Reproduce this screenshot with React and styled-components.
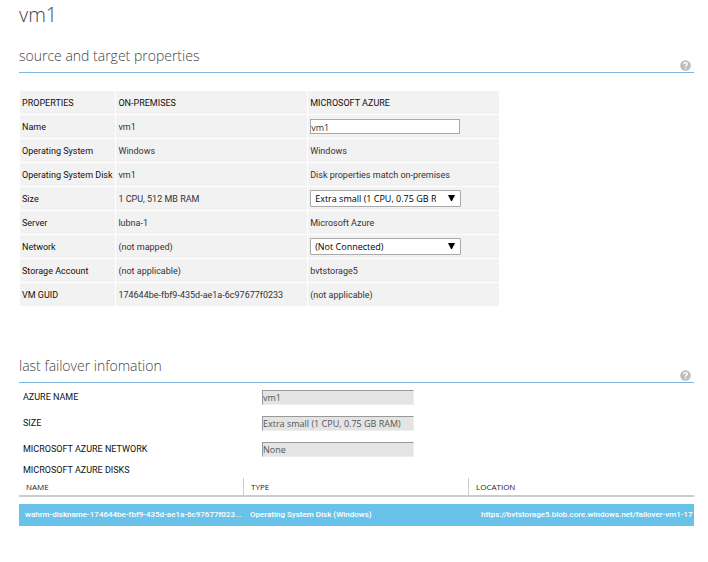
import React from "react";
import styled, { createGlobalStyle } from "styled-components";

const GlobalStyle = createGlobalStyle`
  * { box-sizing: border-box; }
  body {
    margin: 0;
    background: #fff;
    color: #333;
    font: 9px/16px Roboto, "Open Sans", sans-serif;
  }
  input, select, button { font: inherit; color: inherit; margin: 0; }
`;

const Page = styled.main`
  padding: 2px 14px 32px 19px;
`;

const Title = styled.h1`
  margin: 0;
  font-family: "Open Sans", sans-serif;
  font-size: 20px;
  line-height: 26px;
  font-weight: 300;
  color: #444;
`;

const Section = styled.section`
  margin-top: ${(p) => p.$gap}px;
`;

const SectionHeader = styled.header`
  display: flex;
  justify-content: space-between;
  align-items: flex-end;
  height: 28px;
  border-bottom: 1px solid #7fb6e0;
`;

const SectionTitle = styled.h2`
  margin: 0;
  align-self: flex-start;
  font-family: "Open Sans", sans-serif;
  font-size: 14px;
  line-height: 21px;
  font-weight: 300;
  color: #444;
`;

const HelpButton = styled.button`
  display: flex;
  padding: 0;
  margin: 0 3px 1px 0;
  border: 0;
  background: none;
`;

const PropertyTable = styled.table`
  width: 100%;
  max-width: 481px;
  margin-top: 17px;
  border-spacing: 1px;
  table-layout: fixed;
  font-size: 9px;

  th, td {
    height: 23px;
    padding: 0 2px;
    background: #f2f2f2;
    text-align: left;
    white-space: nowrap;
  }
  th { font-weight: 400; color: #111; }
`;

const PropertyColumn = styled.col`
  width: ${(p) => p.$width};
`;

const TextInput = styled.input`
  display: block;
  width: 150px;
  max-width: 100%;
  height: 15px;
  padding: 1px 0 0;
  border: 1px solid #a9a9a9;
  border-radius: 0;
  background: #fff;
  font-family: "Open Sans", sans-serif;
  font-size: 9px;
  line-height: 12px;
`;

const ReadOnlyInput = styled(TextInput)`
  width: 152px;
  color: #555;
  background: #e4e4e4;
  border-color: #999 #eee #eee #999;
`;

const SelectWrap = styled.div`
  display: grid;
  width: 151px;
  max-width: 100%;
  align-items: center;

  > * { grid-area: 1 / 1; }
  svg { justify-self: end; margin: 0 6px 2px 0; pointer-events: none; }
`;

const Select = styled.select`
  appearance: none;
  width: 100%;
  height: 17px;
  padding: 1px 24px 0 4px;
  border: 1px solid #a9a9a9;
  border-radius: 1px;
  background: #fff;
  color: #000;
  font-family: "Open Sans", sans-serif;
  font-size: 9px;
  line-height: 14px;
`;

const FailoverForm = styled.div`
  display: grid;
  gap: 10px;
  padding: 6px 0 0 4px;
`;

const Field = styled.div`
  display: grid;
  grid-template-columns: 239px 1fr;
  align-items: center;
  height: 16px;
  color: #111;
`;

const DisksTitle = styled.h3`
  margin: 5px 0 0 4px;
  font-size: 9px;
  line-height: 16px;
  font-weight: 400;
  color: #111;
`;

const DiskTable = styled.table`
  width: 100%;
  border-collapse: separate;
  border-spacing: 0;
  table-layout: fixed;
  font-size: 8px;
  line-height: 16px;

  th, td { text-align: left; white-space: nowrap; overflow: hidden; }
  th {
    height: 19px;
    padding: 0 7px;
    border-bottom: 2px solid #ccc;
    border-right: 1px solid #ccc;
    font-family: "Open Sans", sans-serif;
    font-weight: 400;
    color: #222;
  }
  th:last-child { border-right: 0; }
  tbody::before { content: ""; display: block; height: 7px; }
  td {
    height: 22px;
    padding: 0 0 0 6px;
    background: #69c2e9;
    color: #fff;
    font-weight: 500;
  }
  td:last-child { padding-left: 12px; }
`;

function HelpIcon() {
  return (
    <svg width="11" height="11" viewBox="0 0 11 11" aria-hidden="true">
      <circle cx="5.5" cy="5.5" r="5.3" fill="#bdbdbd" />
      <path
        d="M3.7 4.2C3.8 2.2 7.3 2.2 7.3 4.2C7.3 5.4 5.5 5.3 5.5 6.8M5.5 7.7V9"
        fill="none"
        stroke="#fff"
        strokeWidth="1.4"
      />
    </svg>
  );
}

function Heading({ children }) {
  return (
    <SectionHeader>
      <SectionTitle>{children}</SectionTitle>
      <HelpButton type="button" aria-label={`Help: ${children}`}>
        <HelpIcon />
      </HelpButton>
    </SectionHeader>
  );
}

function Dropdown({ label, value }) {
  return (
    <SelectWrap>
      <Select aria-label={label} defaultValue={value}>
        <option>{value}</option>
      </Select>
      <svg width="7" height="6" viewBox="0 0 7 6" aria-hidden="true">
        <path d="M0 0H7L4 6H3Z" fill="#000" />
      </svg>
    </SelectWrap>
  );
}

const properties = [
  ["Name", "vm1", <TextInput aria-label="Name" defaultValue="vm1" />],
  ["Operating System", "Windows", "Windows"],
  ["Operating System Disk", "vm1", "Disk properties match on-premises"],
  ["Size", "1 CPU, 512 MB RAM", <Dropdown label="Size" value="Extra small (1 CPU, 0.75 GB RAM)" />],
  ["Server", "lubna-1", "Microsoft Azure"],
  ["Network", "(not mapped)", <Dropdown label="Network" value="(Not Connected)" />],
  ["Storage Account", "(not applicable)", "bvtstorage5"],
  ["VM GUID", "174644be-fbf9-435d-ae1a-6c97677f0233", "(not applicable)"],
];

const failover = [
  ["azure-name", "AZURE NAME", "vm1"],
  ["size", "SIZE", "Extra small (1 CPU, 0.75 GB RAM)"],
  ["network", "MICROSOFT AZURE NETWORK", "None"],
];

export default function App() {
  return (
    <>
      <GlobalStyle />
      <Page>
        <Title>vm1</Title>
        <Section $gap={17}>
          <Heading>source and target properties</Heading>
          <PropertyTable>
            <colgroup>
              <PropertyColumn $width="20%" />
              <PropertyColumn $width="40%" />
              <PropertyColumn $width="40%" />
            </colgroup>
            <thead>
              <tr>
                <th scope="col">PROPERTIES</th>
                <th scope="col">ON-PREMISES</th>
                <th scope="col">MICROSOFT AZURE</th>
              </tr>
            </thead>
            <tbody>
              {properties.map(([name, source, target]) => (
                <tr key={name}>
                  <th scope="row">{name}</th>
                  <td>{source}</td>
                  <td>{target}</td>
                </tr>
              ))}
            </tbody>
          </PropertyTable>
        </Section>
        <Section $gap={48}>
          <Heading>last failover infomation</Heading>
          <FailoverForm>
            {failover.map(([id, label, value]) => (
              <Field key={id}>
                <label htmlFor={id}>{label}</label>
                <ReadOnlyInput id={id} readOnly value={value} />
              </Field>
            ))}
          </FailoverForm>
          <DisksTitle>MICROSOFT AZURE DISKS</DisksTitle>
          <DiskTable>
            <thead>
              <tr>
                <th scope="col">NAME</th>
                <th scope="col">TYPE</th>
                <th scope="col">LOCATION</th>
              </tr>
            </thead>
            <tbody>
              <tr>
                <td>wahrm-diskname-174644be-fbf9-435d-ae1a-6c97677f023...</td>
                <td>Operating System Disk (Windows)</td>
                <td>https://bvtstorage5.blob.core.windows.net/failover-vm1-17</td>
              </tr>
            </tbody>
          </DiskTable>
        </Section>
      </Page>
    </>
  );
}
